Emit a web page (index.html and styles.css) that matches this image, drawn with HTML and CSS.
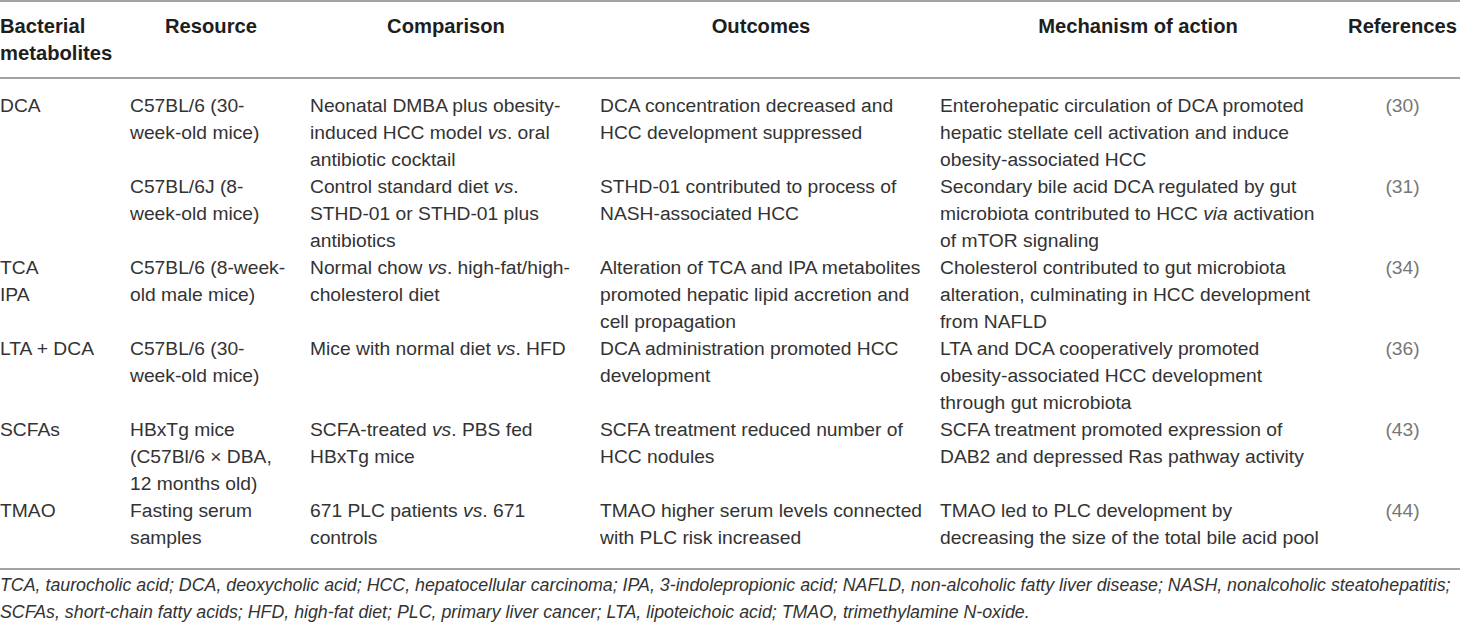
FILE: index.html
```html
<!DOCTYPE html>
<html lang="en">
<head>
<meta charset="utf-8">
<title>Bacterial metabolites and HCC</title>
<link rel="stylesheet" href="styles.css">
</head>
<body>
<div class="table-wrap">
  <table class="data">
    <colgroup>
      <col class="c1"><col class="c2"><col class="c3"><col class="c4"><col class="c5"><col class="c6">
    </colgroup>
    <thead>
      <tr>
        <th class="first">Bacterial metabolites</th>
        <th>Resource</th>
        <th>Comparison</th>
        <th>Outcomes</th>
        <th>Mechanism of action</th>
        <th class="ref">References</th>
      </tr>
    </thead>
    <tbody>
      <tr class="top">
        <td class="first">DCA</td>
        <td>C57BL/6 (30-week-old mice)</td>
        <td>Neonatal DMBA plus obesity-induced HCC model <i>vs</i>. oral antibiotic cocktail</td>
        <td>DCA concentration decreased and HCC development suppressed</td>
        <td>Enterohepatic circulation of DCA promoted hepatic stellate cell activation and induce obesity-associated HCC</td>
        <td class="ref">(30)</td>
      </tr>
      <tr>
        <td class="first"></td>
        <td>C57BL/6J (8-week-old mice)</td>
        <td>Control standard diet <i>vs</i>. STHD-01 or STHD-01 plus antibiotics</td>
        <td>STHD-01 contributed to process of NASH-associated HCC</td>
        <td>Secondary bile acid DCA regulated by gut microbiota contributed to HCC <i>via</i> activation of mTOR signaling</td>
        <td class="ref">(31)</td>
      </tr>
      <tr>
        <td class="first">TCA<br>IPA</td>
        <td>C57BL/6 (8-week-old male mice)</td>
        <td>Normal chow <i>vs</i>. high-fat/high-cholesterol diet</td>
        <td>Alteration of TCA and IPA metabolites promoted hepatic lipid accretion and cell propagation</td>
        <td>Cholesterol contributed to gut microbiota alteration, culminating in HCC development from NAFLD</td>
        <td class="ref">(34)</td>
      </tr>
      <tr>
        <td class="first">LTA + DCA</td>
        <td>C57BL/6 (30-week-old mice)</td>
        <td>Mice with normal diet <i>vs</i>. HFD</td>
        <td>DCA administration promoted HCC development</td>
        <td>LTA and DCA cooperatively promoted obesity-associated HCC development through gut microbiota</td>
        <td class="ref">(36)</td>
      </tr>
      <tr>
        <td class="first">SCFAs</td>
        <td>HBxTg mice (C57Bl/6 × DBA, 12 months old)</td>
        <td>SCFA-treated <i>vs</i>. PBS fed HBxTg mice</td>
        <td>SCFA treatment reduced number of HCC nodules</td>
        <td>SCFA treatment promoted expression of DAB2 and depressed Ras pathway activity</td>
        <td class="ref">(43)</td>
      </tr>
      <tr class="last">
        <td class="first">TMAO</td>
        <td>Fasting serum samples</td>
        <td>671 PLC patients <i>vs</i>. 671 controls</td>
        <td>TMAO higher serum levels connected with PLC risk increased</td>
        <td>TMAO led to PLC development by decreasing the size of the total bile acid pool</td>
        <td class="ref">(44)</td>
      </tr>
    </tbody>
  </table>
  <p class="footnote">TCA, taurocholic acid; DCA, deoxycholic acid; HCC, hepatocellular carcinoma; IPA, 3-indolepropionic acid; NAFLD, non-alcoholic fatty liver disease; NASH, nonalcoholic steatohepatitis; SCFAs, short-chain fatty acids; HFD, high-fat diet; PLC, primary liver cancer; LTA, lipoteichoic acid; TMAO, trimethylamine N-oxide.</p>
</div>
</body>
</html>
```
FILE: styles.css
```css
html, body {
  margin: 0;
  padding: 0;
  background: #ffffff;
}

body {
  font-family: "Liberation Sans", Arial, Helvetica, sans-serif;
  color: #333333;
  width: 1460px;
  overflow: hidden;
}

.table-wrap {
  width: 1460px;
}

.data {
  width: 1460px;
  border-collapse: collapse;
  table-layout: fixed;
  font-size: 19.25px;
  font-weight: 400;
  line-height: 27px;
}

/* column boxes: 0-121, 121-301, 301-591, 591-931, 931-1345, 1345-1460 */
.c1 { width: 121px; }
.c2 { width: 180px; }
.c3 { width: 290px; }
.c4 { width: 340px; }
.c5 { width: 414px; }
.c6 { width: 115px; }

.data thead tr {
  border-top: 2px solid #a2a2a2;
  border-bottom: 2px solid #a2a2a2;
}

.data th {
  font-weight: 700;
  font-size: 20.2px;
  color: #1e1e1e;
  text-align: center;
  vertical-align: top;
  padding: 11px 0 10px 0;
  line-height: 27px;
}

.data th.first {
  text-align: left;
}

.data td {
  vertical-align: top;
  text-align: left;
  padding: 0;
}

.data td:nth-child(2) { padding: 0 12px 0 9px; }
.data td:nth-child(3) { padding: 0 15px 0 9px; }
.data td:nth-child(4) { padding: 0 0 0 9px; }
.data td:nth-child(5) { padding: 0 17px 0 9px; }

.data td.ref {
  text-align: center;
  color: #777777;
}

.data tr.top td {
  padding-top: 13px;
}

.data tr.last td {
  padding-bottom: 17px;
}

.data tbody tr.last {
  border-bottom: 2px solid #a2a2a2;
}

.data i {
  font-style: italic;
}

.footnote {
  margin: 2px 0 0 0;
  font-size: 17.8px;
  font-style: italic;
  line-height: 27px;
}
```
